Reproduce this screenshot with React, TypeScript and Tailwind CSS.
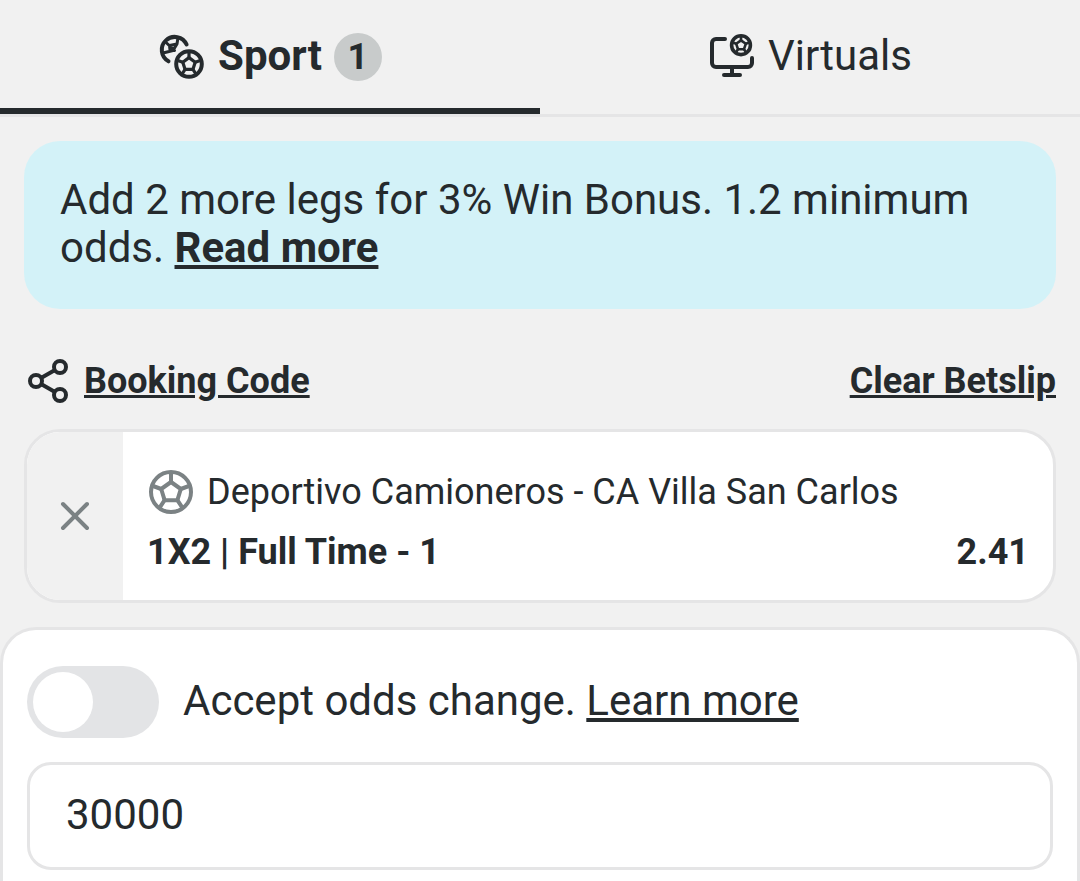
import React from "react";

interface IconProps {
  className?: string;
}

interface Selection {
  id: number;
  match: string;
  market: string;
  odds: string;
}

const selections: Selection[] = [
  {
    id: 1,
    match: "Deportivo Camioneros - CA Villa San Carlos",
    market: "1X2 | Full Time - 1",
    odds: "2.41",
  },
];

function BallIcon({ className }: IconProps) {
  return (
    <svg viewBox="0 0 48 48" className={className} fill="none" stroke="currentColor" strokeWidth="4" strokeLinejoin="round" aria-hidden="true">
      <circle cx="24" cy="24" r="20" />
      <path d="M24 14 33.8 21 30.4 32.2H17.6L14.2 21Z" />
      <path d="M24 14V4M33.8 21 42 18M30.4 32.2l4.6 7M17.6 32.2l-4.6 7M14.2 21 6 18" />
    </svg>
  );
}

function SportIcon({ className }: IconProps) {
  return (
    <svg viewBox="0 0 48 48" className={className} fill="none" stroke="currentColor" strokeWidth="4" strokeLinecap="round" strokeLinejoin="round" aria-hidden="true">
      <path d="M28.6 11.5A13 13 0 1 0 10.5 28.3" />
      <path d="M7 8.5 16.5 17.5M20 4.5 19 11 11.5 12.5M19 11 15 17.5 5 20M11.5 12.5 12 17" strokeWidth="3" />
      <circle cx="31" cy="31" r="12.8" />
      <path d="M31 24.6 37.2 29.2 34.9 36.4H27.1L24.8 29.2Z" strokeWidth="3.2" />
      <path d="M31 24.6V19M37.2 29.2l5-1.8M34.9 36.4l2.8 4.2M27.1 36.4l-2.8 4.2M24.8 29.2l-5-1.8" strokeWidth="3.2" />
    </svg>
  );
}

function VirtualsIcon({ className }: IconProps) {
  return (
    <svg viewBox="0 0 48 48" className={className} fill="none" stroke="currentColor" strokeWidth="4" strokeLinecap="round" strokeLinejoin="round" aria-hidden="true">
      <path d="M17 6H8a4 4 0 0 0-4 4v20a4 4 0 0 0 4 4h32a4 4 0 0 0 4-4v-5M24 34v8M16 42h16" />
      <circle cx="33" cy="12.2" r="9.4" strokeWidth="3.6" />
      <path d="M33 7.4 37.8 10.8 36 16.2H30L28.2 10.8Z" strokeWidth="2.6" />
      <path d="M33 7.4V4M37.8 10.8l3.4-1.2M36 16.2l2 3M30 16.2l-2 3M28.2 10.8l-3.4-1.2" strokeWidth="2.6" />
    </svg>
  );
}

function ShareIcon({ className }: IconProps) {
  return (
    <svg viewBox="0 0 48 48" className={className} fill="none" stroke="currentColor" strokeWidth="4" aria-hidden="true">
      <circle cx="12" cy="24" r="6" />
      <circle cx="36" cy="10" r="6" />
      <circle cx="36" cy="38" r="6" />
      <path d="M17 21 31 13M17 27l14 8" />
    </svg>
  );
}

function CloseIcon({ className }: IconProps) {
  return (
    <svg viewBox="0 0 48 48" className={className} fill="none" stroke="currentColor" strokeWidth="4" strokeLinecap="round" aria-hidden="true">
      <path d="M12 12 36 36M36 12 12 36" />
    </svg>
  );
}

export default function App() {
  const [tab, setTab] = React.useState("sport");
  const [acceptOdds, setAcceptOdds] = React.useState(false);
  const [stake, setStake] = React.useState("30000");

  const tabClass = (name: string) =>
    `flex flex-1 items-center justify-center gap-3 border-b-6 pt-1.5 ${
      tab === name ? "border-[#252a2d] font-bold" : "border-transparent"
    }`;

  return (
    <main className="flex min-h-screen flex-col bg-[#f1f1f1] font-[Roboto,sans-serif] text-[42px] leading-12 text-[#252a2d]">
      {/* Tabs */}
      <div role="tablist" className="flex h-[117px] border-b-3 border-[#e5e5e6]">
        <button role="tab" aria-selected={tab === "sport"} onClick={() => setTab("sport")} className={tabClass("sport")}>
          <SportIcon className="size-12" />
          <span className="pb-0.5">Sport</span>
          <span className="flex size-12 items-center justify-center rounded-full bg-[#c8cbcb] text-4xl font-bold">1</span>
        </button>
        <button role="tab" aria-selected={tab === "virtuals"} onClick={() => setTab("virtuals")} className={tabClass("virtuals")}>
          <VirtualsIcon className="size-12" />
          <span className="pb-0.5">Virtuals</span>
        </button>
      </div>

      {/* Bonus info */}
      <div className="px-6 pt-6">
        <p className="rounded-[36px] bg-[#d3f2f8] px-9 pt-[35px] pb-[37px]">
          Add 2 more legs for 3% Win Bonus. 1.2 minimum odds.{" "}
          <a href="#bonus" className="inline-block font-bold underline">Read more</a>
        </p>

        <div className="flex items-center justify-between pt-12 pb-6 text-4xl leading-12 font-bold">
          <button className="flex items-center gap-3">
            <ShareIcon className="size-12" />
            <span className="underline">Booking Code</span>
          </button>
          <button className="underline">Clear Betslip</button>
        </div>

        {selections.map((s) => (
          <article key={s.id} className="flex overflow-hidden rounded-[36px] border-3 border-[#e5e5e6] bg-white text-4xl">
            <button aria-label="Remove selection" className="flex w-24 shrink-0 items-center justify-center bg-[#f1f1f1] text-[#7b8284]">
              <CloseIcon className="size-12" />
            </button>
            <div className="flex-1 px-6 py-6">
              <div className="flex h-15 items-center gap-3 pt-3">
                <BallIcon className="size-12 text-[#7b8284]" />
                <span>{s.match}</span>
              </div>
              <div className="flex h-15 items-center justify-between pt-3 font-bold">
                <span>{s.market}</span>
                <span>{s.odds}</span>
              </div>
            </div>
          </article>
        ))}
      </div>

      {/* Stake */}
      <section className="mt-6 flex-1 rounded-t-[36px] border-3 border-b-0 border-[#e5e5e6] bg-white px-6 pt-9">
        <div className="flex items-center gap-6">
          <input
            id="accept-odds"
            type="checkbox"
            role="switch"
            checked={acceptOdds}
            onChange={(e) => setAcceptOdds(e.target.checked)}
            className="h-18 w-33 appearance-none rounded-full bg-[#e3e4e6] p-1.5 before:block before:size-15 before:rounded-full before:bg-white checked:bg-[#252a2d] checked:before:ml-auto"
          />
          <p className="pb-0.5">
            <label htmlFor="accept-odds">Accept odds change.</label>{" "}
            <a href="#odds" className="underline">Learn more</a>
          </p>
        </div>
        <input
          type="text"
          inputMode="numeric"
          aria-label="Stake"
          value={stake}
          onChange={(e) => setStake(e.target.value)}
          className="mt-6 block h-27 w-full rounded-3xl border-3 border-[#e5e5e6] bg-white px-9 pb-1"
        />
      </section>
    </main>
  );
}
